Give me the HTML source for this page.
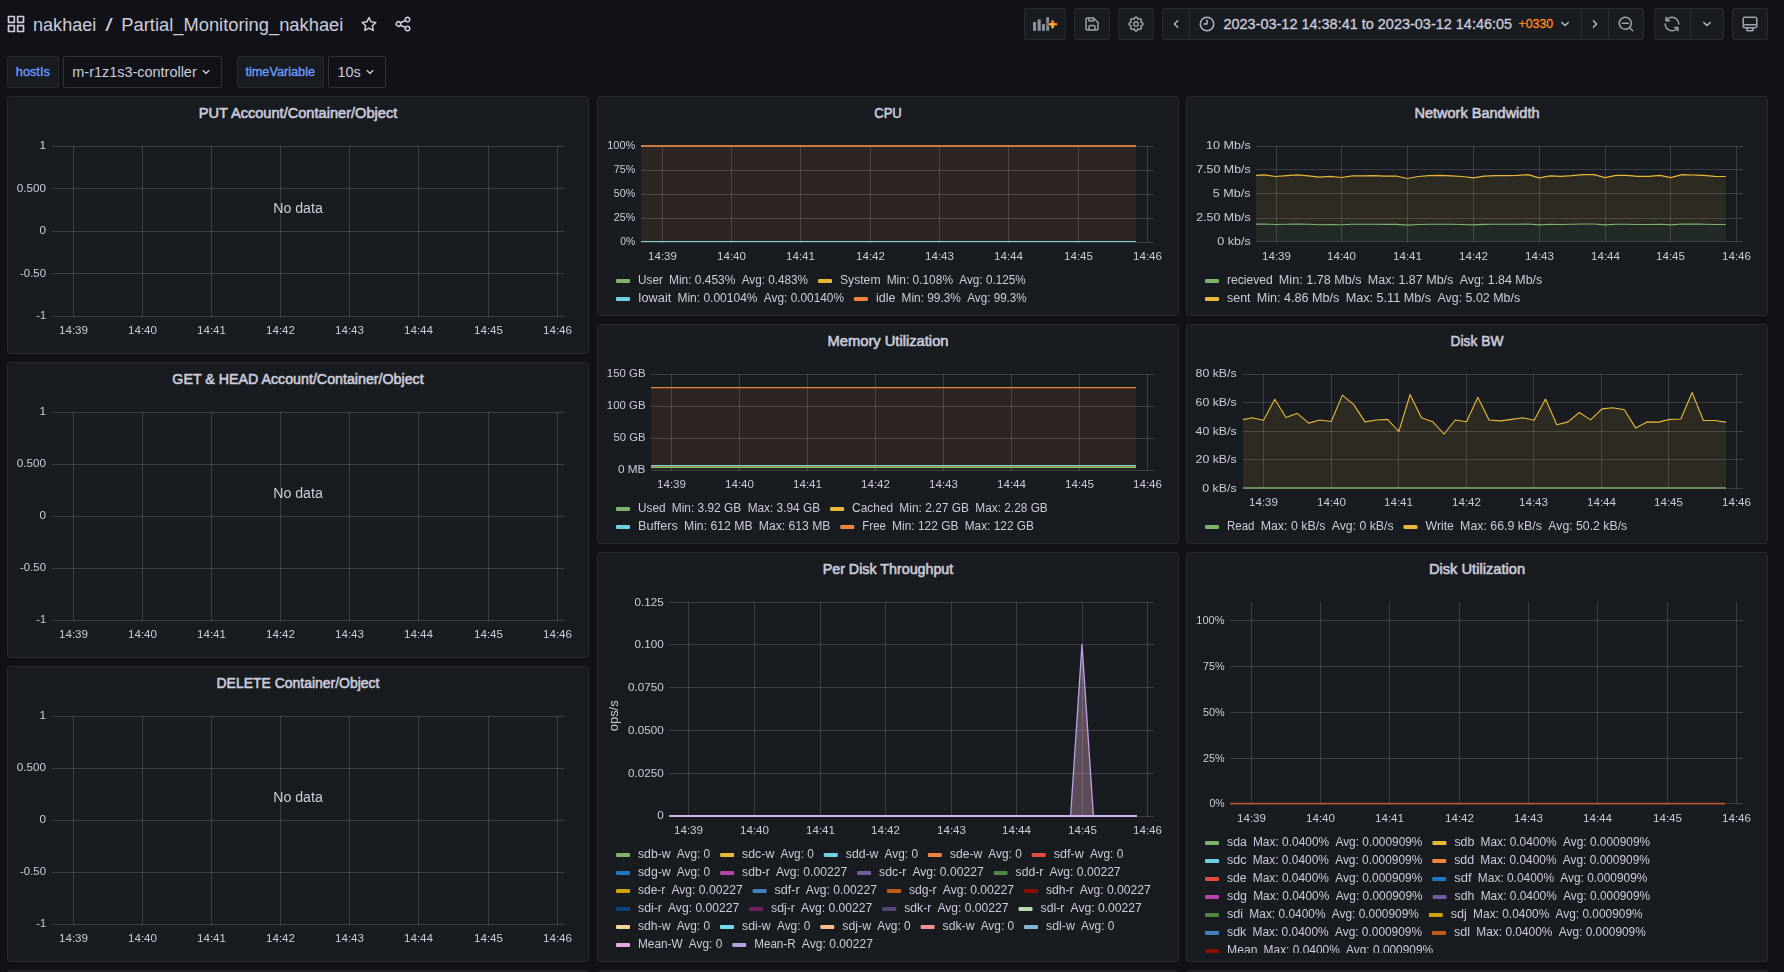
<!DOCTYPE html>
<html lang="en"><head><meta charset="utf-8"><title>Partial_Monitoring_nakhaei - Grafana</title>
<style>
html,body{margin:0;padding:0;background:#111217;}
body{width:1784px;height:972px;overflow:hidden;position:relative;font-family:"Liberation Sans",sans-serif;color:#ccccdc;}
.panel{position:absolute;box-sizing:border-box;background:#181b1f;border:1px solid #25272c;border-radius:3px;overflow:hidden}
.psvg{position:absolute;left:-1px;top:-1px;font-family:"Liberation Sans",sans-serif}
svg text{font-family:"Liberation Sans",sans-serif}
#root{position:absolute;left:0;top:0;width:1784px;height:972px}
.gl{will-change:transform}

.tb{position:absolute;box-sizing:border-box;background:#181b1f;border:1px solid #2a2c32;border-radius:2px}
.vl{position:absolute;box-sizing:border-box;background:#181b1f;border:1px solid #25272c;border-radius:2px}
.vv{position:absolute;box-sizing:border-box;background:#111217;border:1px solid #2f3137;border-radius:2px}
#hdr{position:absolute;left:0;top:0}

</style></head><body>
<div id="root">
<header><div class="tb" style="left:1024px;top:8px;width:42px;height:32px"></div><div class="tb" style="left:1074px;top:8px;width:36px;height:32px"></div><div class="tb" style="left:1118px;top:8px;width:36px;height:32px"></div><div class="tb" style="left:1162px;top:8px;width:28px;height:32px;border-radius:2px 0 0 2px"></div><div class="tb" style="left:1189px;top:8px;width:393px;height:32px;border-radius:0"></div><div class="tb" style="left:1581px;top:8px;width:28px;height:32px;border-radius:0"></div><div class="tb" style="left:1608px;top:8px;width:36px;height:32px;border-radius:0 2px 2px 0"></div><div class="tb" style="left:1654px;top:8px;width:37px;height:32px;border-radius:2px 0 0 2px"></div><div class="tb" style="left:1690px;top:8px;width:34px;height:32px;border-radius:0 2px 2px 0"></div><div class="tb" style="left:1732px;top:8px;width:36px;height:32px"></div><div class="vl" style="left:7px;top:56px;width:52px;height:32px"></div><div class="vv" style="left:63px;top:56px;width:159px;height:32px"></div><div class="vl" style="left:237px;top:56px;width:87px;height:32px"></div><div class="vv" style="left:328px;top:56px;width:58px;height:32px"></div><svg id="hdr" width="1784" height="96" viewBox="0 0 1784 96"><path transform="translate(6,14) scale(0.8333)" d="M10 13H3a1 1 0 0 0-1 1v7a1 1 0 0 0 1 1h7a1 1 0 0 0 1-1v-7a1 1 0 0 0-1-1zm-1 7H4v-5h5zM21 2h-7a1 1 0 0 0-1 1v7a1 1 0 0 0 1 1h7a1 1 0 0 0 1-1V3a1 1 0 0 0-1-1zm-1 7h-5V4h5zm1 4h-7a1 1 0 0 0-1 1v7a1 1 0 0 0 1 1h7a1 1 0 0 0 1-1v-7a1 1 0 0 0-1-1zm-1 7h-5v-5h5zM10 2H3a1 1 0 0 0-1 1v7a1 1 0 0 0 1 1h7a1 1 0 0 0 1-1V3a1 1 0 0 0-1-1zM9 9H4V4h5z" fill="#ccccdc"/><text x="33.00" y="31.00" font-size="18" fill="#ccccdc" text-anchor="start" textLength="63.33" lengthAdjust="spacingAndGlyphs">nakhaei</text><text x="105.20" y="31.00" font-size="18" fill="#ccccdc" text-anchor="start" textLength="7.43" lengthAdjust="spacingAndGlyphs">/</text><text x="121.30" y="31.00" font-size="18" fill="#ccccdc" text-anchor="start" textLength="222.06" lengthAdjust="spacingAndGlyphs">Partial_Monitoring_nakhaei</text><path transform="translate(360,15) scale(0.7500)" d="M22,9.67A1,1,0,0,0,21.14,9l-5.69-.83L12.9,3a1,1,0,0,0-1.8,0L8.55,8.16,2.86,9a1,1,0,0,0-.81.68,1,1,0,0,0,.25,1l4.13,4-1,5.68A1,1,0,0,0,6.9,21.44L12,18.77l5.1,2.67a.93.93,0,0,0,.46.12,1,1,0,0,0,.59-.19,1,1,0,0,0,.4-1l-1-5.68,4.13-4A1,1,0,0,0,22,9.67Zm-6.15,4a1,1,0,0,0-.29.88l.72,4.2-3.76-2a1.06,1.06,0,0,0-.94,0l-3.76,2,.72-4.2a1,1,0,0,0-.29-.88l-3-3,4.21-.61a1,1,0,0,0,.76-.55L12,5.7l1.88,3.82a1,1,0,0,0,.76.55l4.21.61Z" fill="#ccccdc"/><path transform="translate(394,15) scale(0.7500)" d="M18,14a4,4,0,0,0-3.08,1.48l-5.1-2.35a3.64,3.64,0,0,0,0-2.26l5.1-2.35A4,4,0,1,0,14,6a4.17,4.17,0,0,0,.07.71L8.79,9.14a4,4,0,1,0,0,5.72l5.28,2.43A4.17,4.17,0,0,0,14,18a4,4,0,1,0,4-4ZM18,4a2,2,0,1,1-2,2A2,2,0,0,1,18,4ZM6,14a2,2,0,1,1,2-2A2,2,0,0,1,6,14Zm12,6a2,2,0,1,1,2-2A2,2,0,0,1,18,20Z" fill="#ccccdc"/><defs><linearGradient id="pg" x1="0" y1="0" x2="0" y2="1"><stop offset="0" stop-color="#ff8533"/><stop offset="0.55" stop-color="#ffa82e"/><stop offset="1" stop-color="#ffd61a"/></linearGradient></defs><g fill="#8d93a0"><rect x="1033" y="22.1" width="3" height="8.7"/><rect x="1037.6" y="19.4" width="3.1" height="11.4"/><rect x="1042" y="24.1" width="2.9" height="6.7"/><rect x="1046.3" y="17.2" width="2.8" height="13.6"/></g><path d="M1051.1 19.9h3v2.8h3.2v3h-3.2v2.8h-3v-2.8h-3.2v-3h3.2z" fill="url(#pg)" stroke="#181b1f" stroke-width="0.6"/><path transform="translate(1083,15) scale(0.7500)" d="M20.71,9.29l-6-6a1,1,0,0,0-.32-.21A1.09,1.09,0,0,0,14,3H6A3,3,0,0,0,3,6V18a3,3,0,0,0,3,3H18a3,3,0,0,0,3-3V10A1,1,0,0,0,20.71,9.29ZM9,5h4V7H9Zm6,14H9V16a1,1,0,0,1,1-1h4a1,1,0,0,1,1,1Zm4-1a1,1,0,0,1-1,1H17V16a3,3,0,0,0-3-3H10a3,3,0,0,0-3,3v3H6a1,1,0,0,1-1-1V6A1,1,0,0,1,6,5H7V8A1,1,0,0,0,8,9h6a1,1,0,0,0,1-1V6.41l4,4Z" fill="#9fa1ab"/><path transform="translate(1127,15) scale(0.7500)" d="M21.32,9.55l-1.89-.63.89-1.78A1,1,0,0,0,20.13,6L18,3.87a1,1,0,0,0-1.15-.19l-1.78.89-.63-1.89A1,1,0,0,0,13.5,2h-3a1,1,0,0,0-.95.68L8.92,4.57,7.14,3.68A1,1,0,0,0,6,3.87L3.87,6a1,1,0,0,0-.19,1.15l.89,1.78-1.89.63A1,1,0,0,0,2,10.5v3a1,1,0,0,0,.68.95l1.89.63-.89,1.78A1,1,0,0,0,3.87,18L6,20.13a1,1,0,0,0,1.15.19l1.78-.89.63,1.89a1,1,0,0,0,.95.68h3a1,1,0,0,0,.95-.68l.63-1.89,1.78.89A1,1,0,0,0,18,20.13L20.13,18a1,1,0,0,0,.19-1.15l-.89-1.78,1.89-.63A1,1,0,0,0,22,13.5v-3A1,1,0,0,0,21.32,9.55ZM20,12.78l-1.2.4A2,2,0,0,0,17.64,16l.57,1.14-1.1,1.1L16,17.64a2,2,0,0,0-2.79,1.16l-.4,1.2H11.22l-.4-1.2A2,2,0,0,0,8,17.64l-1.14.57-1.1-1.1L6.36,16A2,2,0,0,0,5.2,13.18L4,12.78V11.22l1.2-.4A2,2,0,0,0,6.36,8L5.79,6.89l1.1-1.1L8,6.36A2,2,0,0,0,10.82,5.2l.4-1.2h1.56l.4,1.2A2,2,0,0,0,16,6.36l1.14-.57,1.1,1.1L17.64,8a2,2,0,0,0,1.16,2.79l1.2.4ZM12,8a4,4,0,1,0,4,4A4,4,0,0,0,12,8Zm0,6a2,2,0,1,1,2-2A2,2,0,0,1,12,14Z" fill="#9fa1ab"/><path transform="translate(1167,15) scale(0.7500)" d="M11.29,12l3.54-3.54a1,1,0,0,0,0-1.41,1,1,0,0,0-1.42,0L9.17,11.29a1,1,0,0,0,0,1.42L13.41,17a1,1,0,0,0,.71.29,1,1,0,0,0,.71-.29,1,1,0,0,0,0-1.41Z" fill="#b3b5c2"/><path transform="translate(1198,15) scale(0.7500)" d="M12,2A10,10,0,1,0,22,12,10.01114,10.01114,0,0,0,12,2Zm0,18a8,8,0,1,1,8-8A8.00917,8.00917,0,0,1,12,20ZM12,6a.99974.99974,0,0,0-1,1v4H8a1,1,0,0,0,0,2h4a.99974.99974,0,0,0,1-1V7A.99974.99974,0,0,0,12,6Z" fill="#b3b5c2"/><text x="1223.50" y="29.00" font-size="14" fill="#ccccdc" text-anchor="start" textLength="288.57" lengthAdjust="spacingAndGlyphs" stroke="#ccccdc" stroke-width="0.3">2023-03-12 14:38:41 to 2023-03-12 14:46:05</text><text x="1518.50" y="28.20" font-size="12" fill="#ff8a1e" text-anchor="start" textLength="34.57" lengthAdjust="spacingAndGlyphs" stroke="#ff8a1e" stroke-width="0.3">+0330</text><path transform="translate(1556,15) scale(0.7500)" d="M17,9.17a1,1,0,0,0-1.41,0L12,12.71,8.46,9.17a1,1,0,0,0-1.41,0,1,1,0,0,0,0,1.42l4.24,4.24a1,1,0,0,0,1.42,0L17,10.59A1,1,0,0,0,17,9.17Z" fill="#b3b5c2"/><path transform="translate(1586,15) scale(0.7500)" d="M14.83,11.29,10.59,7.05a1,1,0,0,0-1.42,0,1,1,0,0,0,0,1.41L12.71,12,9.17,15.54a1,1,0,0,0,0,1.41,1,1,0,0,0,.71.29,1,1,0,0,0,.71-.29l4.24-4.24A1,1,0,0,0,14.83,11.29Z" fill="#b3b5c2"/><path transform="translate(1617,15) scale(0.7500)" d="M21.71,20.29,18,16.61A9,9,0,1,0,16.61,18l3.68,3.68a1,1,0,0,0,1.42,0A1,1,0,0,0,21.71,20.29ZM11,18a7,7,0,1,1,7-7A7,7,0,0,1,11,18Zm4-8H7a1,1,0,0,0,0,2h8a1,1,0,0,0,0-2Z" fill="#9fa1ab"/><path transform="translate(1663,15) scale(0.7500)" d="M19.91,15.51H15.38a1,1,0,0,0,0,2h2.4A8,8,0,0,1,4,12a1,1,0,0,0-2,0,10,10,0,0,0,16.88,7.23V21a1,1,0,0,0,2,0V16.5A1,1,0,0,0,19.91,15.51ZM12,2A10,10,0,0,0,5.12,4.77V3a1,1,0,0,0-2,0V7.5a1,1,0,0,0,1,1h4.5a1,1,0,0,0,0-2H6.22A8,8,0,0,1,20,12a1,1,0,0,0,2,0A10,10,0,0,0,12,2Z" fill="#9fa1ab"/><path transform="translate(1698,15) scale(0.7500)" d="M17,9.17a1,1,0,0,0-1.41,0L12,12.71,8.46,9.17a1,1,0,0,0-1.41,0,1,1,0,0,0,0,1.42l4.24,4.24a1,1,0,0,0,1.42,0L17,10.59A1,1,0,0,0,17,9.17Z" fill="#b3b5c2"/><path transform="translate(1741,15) scale(0.7500)" d="M19,2H5A3,3,0,0,0,2,5V15a3,3,0,0,0,3,3H7.64l-.58,1a2,2,0,0,0,0,2,2,2,0,0,0,1.75,1h6.46A2,2,0,0,0,17,21a2,2,0,0,0,0-2l-.59-1H19a3,3,0,0,0,3-3V5A3,3,0,0,0,19,2ZM8.77,20,10,18H14l1.2,2ZM20,15a1,1,0,0,1-1,1H5a1,1,0,0,1-1-1V14H20Zm0-3H4V5A1,1,0,0,1,5,4H19a1,1,0,0,1,1,1Z" fill="#9fa1ab"/><text x="15.80" y="76.30" font-size="12" fill="#6e9fff" text-anchor="start" textLength="34.03" lengthAdjust="spacingAndGlyphs" stroke="#6e9fff" stroke-width="0.3">hostIs</text><text x="72.30" y="77.00" font-size="14" fill="#ccccdc" text-anchor="start" textLength="124.43" lengthAdjust="spacingAndGlyphs">m-r1z1s3-controller</text><path transform="translate(198,64) scale(0.6667)" d="M17,9.17a1,1,0,0,0-1.41,0L12,12.71,8.46,9.17a1,1,0,0,0-1.41,0,1,1,0,0,0,0,1.42l4.24,4.24a1,1,0,0,0,1.42,0L17,10.59A1,1,0,0,0,17,9.17Z" fill="#ccccdc"/><text x="245.40" y="76.30" font-size="12" fill="#6e9fff" text-anchor="start" textLength="69.66" lengthAdjust="spacingAndGlyphs" stroke="#6e9fff" stroke-width="0.3">timeVariable</text><text x="337.50" y="77.00" font-size="14" fill="#ccccdc" text-anchor="start" textLength="23.26" lengthAdjust="spacingAndGlyphs">10s</text><path transform="translate(362,64) scale(0.6667)" d="M17,9.17a1,1,0,0,0-1.41,0L12,12.71,8.46,9.17a1,1,0,0,0-1.41,0,1,1,0,0,0,0,1.42l4.24,4.24a1,1,0,0,0,1.42,0L17,10.59A1,1,0,0,0,17,9.17Z" fill="#ccccdc"/></svg></header>
<main>
<section class="panel" style="left:7px;top:96px;width:582px;height:258px"><svg class="psvg" width="582" height="258" viewBox="7 96 582 258"><text x="298.00" y="117.50" font-size="14" fill="#ccccdc" text-anchor="middle" textLength="198.50" lengthAdjust="spacingAndGlyphs" stroke="#ccccdc" stroke-width="0.55">PUT Account/Container/Object</text></svg><svg class="psvg gl" width="582" height="258" viewBox="7 96 582 258"><g stroke="rgba(255,255,255,0.15)" stroke-width="1" shape-rendering="crispEdges"><line x1="52" x2="564" y1="146.5" y2="146.5"/><line x1="52" x2="564" y1="188.5" y2="188.5"/><line x1="52" x2="564" y1="231.5" y2="231.5"/><line x1="52" x2="564" y1="273.5" y2="273.5"/><line x1="52" x2="564" y1="316.5" y2="316.5"/><line x1="73.5" x2="73.5" y1="146" y2="317"/><line x1="142.5" x2="142.5" y1="146" y2="317"/><line x1="211.5" x2="211.5" y1="146" y2="317"/><line x1="280.5" x2="280.5" y1="146" y2="317"/><line x1="349.5" x2="349.5" y1="146" y2="317"/><line x1="418.5" x2="418.5" y1="146" y2="317"/><line x1="488.5" x2="488.5" y1="146" y2="317"/><line x1="557.5" x2="557.5" y1="146" y2="317"/></g><text x="46.00" y="149.40" font-size="11.5" fill="#ccccdc" text-anchor="end" textLength="6.54" lengthAdjust="spacingAndGlyphs">1</text><text x="46.00" y="191.90" font-size="11.5" fill="#ccccdc" text-anchor="end" textLength="29.24" lengthAdjust="spacingAndGlyphs">0.500</text><text x="46.00" y="234.40" font-size="11.5" fill="#ccccdc" text-anchor="end" textLength="6.54" lengthAdjust="spacingAndGlyphs">0</text><text x="46.00" y="276.90" font-size="11.5" fill="#ccccdc" text-anchor="end" textLength="25.91" lengthAdjust="spacingAndGlyphs">-0.50</text><text x="46.00" y="319.40" font-size="11.5" fill="#ccccdc" text-anchor="end" textLength="9.76" lengthAdjust="spacingAndGlyphs">-1</text><text x="73.50" y="334.30" font-size="11.5" fill="#ccccdc" text-anchor="middle" textLength="28.99" lengthAdjust="spacingAndGlyphs">14:39</text><text x="142.50" y="334.30" font-size="11.5" fill="#ccccdc" text-anchor="middle" textLength="28.99" lengthAdjust="spacingAndGlyphs">14:40</text><text x="211.50" y="334.30" font-size="11.5" fill="#ccccdc" text-anchor="middle" textLength="28.99" lengthAdjust="spacingAndGlyphs">14:41</text><text x="280.50" y="334.30" font-size="11.5" fill="#ccccdc" text-anchor="middle" textLength="28.99" lengthAdjust="spacingAndGlyphs">14:42</text><text x="349.50" y="334.30" font-size="11.5" fill="#ccccdc" text-anchor="middle" textLength="28.99" lengthAdjust="spacingAndGlyphs">14:43</text><text x="418.50" y="334.30" font-size="11.5" fill="#ccccdc" text-anchor="middle" textLength="28.99" lengthAdjust="spacingAndGlyphs">14:44</text><text x="488.50" y="334.30" font-size="11.5" fill="#ccccdc" text-anchor="middle" textLength="28.99" lengthAdjust="spacingAndGlyphs">14:45</text><text x="557.50" y="334.30" font-size="11.5" fill="#ccccdc" text-anchor="middle" textLength="28.99" lengthAdjust="spacingAndGlyphs">14:46</text><text x="298.00" y="212.70" font-size="14" fill="#c7d0d9" text-anchor="middle" textLength="49.63" lengthAdjust="spacingAndGlyphs">No data</text></svg></section><section class="panel" style="left:7px;top:362px;width:582px;height:296px"><svg class="psvg" width="582" height="296" viewBox="7 362 582 296"><text x="298.00" y="383.50" font-size="14" fill="#ccccdc" text-anchor="middle" textLength="251.31" lengthAdjust="spacingAndGlyphs" stroke="#ccccdc" stroke-width="0.55">GET &amp; HEAD Account/Container/Object</text></svg><svg class="psvg gl" width="582" height="296" viewBox="7 362 582 296"><g stroke="rgba(255,255,255,0.15)" stroke-width="1" shape-rendering="crispEdges"><line x1="52" x2="564" y1="412.5" y2="412.5"/><line x1="52" x2="564" y1="464.5" y2="464.5"/><line x1="52" x2="564" y1="516.5" y2="516.5"/><line x1="52" x2="564" y1="568.5" y2="568.5"/><line x1="52" x2="564" y1="620.5" y2="620.5"/><line x1="73.5" x2="73.5" y1="412" y2="621"/><line x1="142.5" x2="142.5" y1="412" y2="621"/><line x1="211.5" x2="211.5" y1="412" y2="621"/><line x1="280.5" x2="280.5" y1="412" y2="621"/><line x1="349.5" x2="349.5" y1="412" y2="621"/><line x1="418.5" x2="418.5" y1="412" y2="621"/><line x1="488.5" x2="488.5" y1="412" y2="621"/><line x1="557.5" x2="557.5" y1="412" y2="621"/></g><text x="46.00" y="415.40" font-size="11.5" fill="#ccccdc" text-anchor="end" textLength="6.54" lengthAdjust="spacingAndGlyphs">1</text><text x="46.00" y="467.40" font-size="11.5" fill="#ccccdc" text-anchor="end" textLength="29.24" lengthAdjust="spacingAndGlyphs">0.500</text><text x="46.00" y="519.40" font-size="11.5" fill="#ccccdc" text-anchor="end" textLength="6.54" lengthAdjust="spacingAndGlyphs">0</text><text x="46.00" y="571.40" font-size="11.5" fill="#ccccdc" text-anchor="end" textLength="25.91" lengthAdjust="spacingAndGlyphs">-0.50</text><text x="46.00" y="623.40" font-size="11.5" fill="#ccccdc" text-anchor="end" textLength="9.76" lengthAdjust="spacingAndGlyphs">-1</text><text x="73.50" y="638.30" font-size="11.5" fill="#ccccdc" text-anchor="middle" textLength="28.99" lengthAdjust="spacingAndGlyphs">14:39</text><text x="142.50" y="638.30" font-size="11.5" fill="#ccccdc" text-anchor="middle" textLength="28.99" lengthAdjust="spacingAndGlyphs">14:40</text><text x="211.50" y="638.30" font-size="11.5" fill="#ccccdc" text-anchor="middle" textLength="28.99" lengthAdjust="spacingAndGlyphs">14:41</text><text x="280.50" y="638.30" font-size="11.5" fill="#ccccdc" text-anchor="middle" textLength="28.99" lengthAdjust="spacingAndGlyphs">14:42</text><text x="349.50" y="638.30" font-size="11.5" fill="#ccccdc" text-anchor="middle" textLength="28.99" lengthAdjust="spacingAndGlyphs">14:43</text><text x="418.50" y="638.30" font-size="11.5" fill="#ccccdc" text-anchor="middle" textLength="28.99" lengthAdjust="spacingAndGlyphs">14:44</text><text x="488.50" y="638.30" font-size="11.5" fill="#ccccdc" text-anchor="middle" textLength="28.99" lengthAdjust="spacingAndGlyphs">14:45</text><text x="557.50" y="638.30" font-size="11.5" fill="#ccccdc" text-anchor="middle" textLength="28.99" lengthAdjust="spacingAndGlyphs">14:46</text><text x="298.00" y="497.70" font-size="14" fill="#c7d0d9" text-anchor="middle" textLength="49.63" lengthAdjust="spacingAndGlyphs">No data</text></svg></section><section class="panel" style="left:7px;top:666px;width:582px;height:296px"><svg class="psvg" width="582" height="296" viewBox="7 666 582 296"><text x="298.00" y="687.50" font-size="14" fill="#ccccdc" text-anchor="middle" textLength="162.96" lengthAdjust="spacingAndGlyphs" stroke="#ccccdc" stroke-width="0.55">DELETE Container/Object</text></svg><svg class="psvg gl" width="582" height="296" viewBox="7 666 582 296"><g stroke="rgba(255,255,255,0.15)" stroke-width="1" shape-rendering="crispEdges"><line x1="52" x2="564" y1="716.5" y2="716.5"/><line x1="52" x2="564" y1="768.5" y2="768.5"/><line x1="52" x2="564" y1="820.5" y2="820.5"/><line x1="52" x2="564" y1="872.5" y2="872.5"/><line x1="52" x2="564" y1="924.5" y2="924.5"/><line x1="73.5" x2="73.5" y1="716" y2="925"/><line x1="142.5" x2="142.5" y1="716" y2="925"/><line x1="211.5" x2="211.5" y1="716" y2="925"/><line x1="280.5" x2="280.5" y1="716" y2="925"/><line x1="349.5" x2="349.5" y1="716" y2="925"/><line x1="418.5" x2="418.5" y1="716" y2="925"/><line x1="488.5" x2="488.5" y1="716" y2="925"/><line x1="557.5" x2="557.5" y1="716" y2="925"/></g><text x="46.00" y="719.40" font-size="11.5" fill="#ccccdc" text-anchor="end" textLength="6.54" lengthAdjust="spacingAndGlyphs">1</text><text x="46.00" y="771.40" font-size="11.5" fill="#ccccdc" text-anchor="end" textLength="29.24" lengthAdjust="spacingAndGlyphs">0.500</text><text x="46.00" y="823.40" font-size="11.5" fill="#ccccdc" text-anchor="end" textLength="6.54" lengthAdjust="spacingAndGlyphs">0</text><text x="46.00" y="875.40" font-size="11.5" fill="#ccccdc" text-anchor="end" textLength="25.91" lengthAdjust="spacingAndGlyphs">-0.50</text><text x="46.00" y="927.40" font-size="11.5" fill="#ccccdc" text-anchor="end" textLength="9.76" lengthAdjust="spacingAndGlyphs">-1</text><text x="73.50" y="942.30" font-size="11.5" fill="#ccccdc" text-anchor="middle" textLength="28.99" lengthAdjust="spacingAndGlyphs">14:39</text><text x="142.50" y="942.30" font-size="11.5" fill="#ccccdc" text-anchor="middle" textLength="28.99" lengthAdjust="spacingAndGlyphs">14:40</text><text x="211.50" y="942.30" font-size="11.5" fill="#ccccdc" text-anchor="middle" textLength="28.99" lengthAdjust="spacingAndGlyphs">14:41</text><text x="280.50" y="942.30" font-size="11.5" fill="#ccccdc" text-anchor="middle" textLength="28.99" lengthAdjust="spacingAndGlyphs">14:42</text><text x="349.50" y="942.30" font-size="11.5" fill="#ccccdc" text-anchor="middle" textLength="28.99" lengthAdjust="spacingAndGlyphs">14:43</text><text x="418.50" y="942.30" font-size="11.5" fill="#ccccdc" text-anchor="middle" textLength="28.99" lengthAdjust="spacingAndGlyphs">14:44</text><text x="488.50" y="942.30" font-size="11.5" fill="#ccccdc" text-anchor="middle" textLength="28.99" lengthAdjust="spacingAndGlyphs">14:45</text><text x="557.50" y="942.30" font-size="11.5" fill="#ccccdc" text-anchor="middle" textLength="28.99" lengthAdjust="spacingAndGlyphs">14:46</text><text x="298.00" y="801.70" font-size="14" fill="#c7d0d9" text-anchor="middle" textLength="49.63" lengthAdjust="spacingAndGlyphs">No data</text></svg></section><section class="panel" style="left:597px;top:96px;width:582px;height:220px"><svg class="psvg" width="582" height="220" viewBox="597 96 582 220"><text x="888.00" y="117.50" font-size="14" fill="#ccccdc" text-anchor="middle" textLength="27.53" lengthAdjust="spacingAndGlyphs" stroke="#ccccdc" stroke-width="0.55">CPU</text></svg><svg class="psvg gl" width="582" height="220" viewBox="597 96 582 220"><rect x="641" y="147" width="495" height="95" fill="#EF843C" fill-opacity="0.1"/><g stroke="rgba(255,255,255,0.15)" stroke-width="1" shape-rendering="crispEdges"><line x1="641" x2="1154" y1="146.5" y2="146.5"/><line x1="641" x2="1154" y1="170.5" y2="170.5"/><line x1="641" x2="1154" y1="194.5" y2="194.5"/><line x1="641" x2="1154" y1="218.5" y2="218.5"/><line x1="641" x2="1154" y1="242.5" y2="242.5"/><line x1="662.5" x2="662.5" y1="146" y2="243"/><line x1="731.5" x2="731.5" y1="146" y2="243"/><line x1="800.5" x2="800.5" y1="146" y2="243"/><line x1="870.5" x2="870.5" y1="146" y2="243"/><line x1="939.5" x2="939.5" y1="146" y2="243"/><line x1="1008.5" x2="1008.5" y1="146" y2="243"/><line x1="1078.5" x2="1078.5" y1="146" y2="243"/><line x1="1147.5" x2="1147.5" y1="146" y2="243"/></g><rect x="641" y="145" width="495" height="2" fill="#cc7a3c"/><rect x="641" y="241" width="495" height="1" fill="#78d2d8"/><text x="635.30" y="149.10" font-size="11.5" fill="#ccccdc" text-anchor="end" textLength="28.15" lengthAdjust="spacingAndGlyphs">100%</text><text x="635.30" y="173.10" font-size="11.5" fill="#ccccdc" text-anchor="end" textLength="21.61" lengthAdjust="spacingAndGlyphs">75%</text><text x="635.30" y="197.10" font-size="11.5" fill="#ccccdc" text-anchor="end" textLength="21.61" lengthAdjust="spacingAndGlyphs">50%</text><text x="635.30" y="221.10" font-size="11.5" fill="#ccccdc" text-anchor="end" textLength="21.61" lengthAdjust="spacingAndGlyphs">25%</text><text x="635.30" y="245.10" font-size="11.5" fill="#ccccdc" text-anchor="end" textLength="15.07" lengthAdjust="spacingAndGlyphs">0%</text><text x="662.50" y="260.30" font-size="11.5" fill="#ccccdc" text-anchor="middle" textLength="28.99" lengthAdjust="spacingAndGlyphs">14:39</text><text x="731.50" y="260.30" font-size="11.5" fill="#ccccdc" text-anchor="middle" textLength="28.99" lengthAdjust="spacingAndGlyphs">14:40</text><text x="800.50" y="260.30" font-size="11.5" fill="#ccccdc" text-anchor="middle" textLength="28.99" lengthAdjust="spacingAndGlyphs">14:41</text><text x="870.50" y="260.30" font-size="11.5" fill="#ccccdc" text-anchor="middle" textLength="28.99" lengthAdjust="spacingAndGlyphs">14:42</text><text x="939.50" y="260.30" font-size="11.5" fill="#ccccdc" text-anchor="middle" textLength="28.99" lengthAdjust="spacingAndGlyphs">14:43</text><text x="1008.50" y="260.30" font-size="11.5" fill="#ccccdc" text-anchor="middle" textLength="28.99" lengthAdjust="spacingAndGlyphs">14:44</text><text x="1078.50" y="260.30" font-size="11.5" fill="#ccccdc" text-anchor="middle" textLength="28.99" lengthAdjust="spacingAndGlyphs">14:45</text><text x="1147.50" y="260.30" font-size="11.5" fill="#ccccdc" text-anchor="middle" textLength="28.99" lengthAdjust="spacingAndGlyphs">14:46</text><rect x="616.0" y="279" width="14" height="4" rx="1" fill="#7EB26D"/><text x="638.00" y="284.00" font-size="12" fill="#ccccdc" text-anchor="start" textLength="24.86" lengthAdjust="spacingAndGlyphs">User</text><text x="669.00" y="284.00" font-size="12" fill="#ccccdc" text-anchor="start" textLength="66.34" lengthAdjust="spacingAndGlyphs">Min: 0.453%</text><text x="741.69" y="284.00" font-size="12" fill="#ccccdc" text-anchor="start" textLength="66.32" lengthAdjust="spacingAndGlyphs">Avg: 0.483%</text><rect x="818.0" y="279" width="14" height="4" rx="1" fill="#EAB839"/><text x="839.97" y="284.00" font-size="12" fill="#ccccdc" text-anchor="start" textLength="40.56" lengthAdjust="spacingAndGlyphs">System</text><text x="886.67" y="284.00" font-size="12" fill="#ccccdc" text-anchor="start" textLength="66.34" lengthAdjust="spacingAndGlyphs">Min: 0.108%</text><text x="959.36" y="284.00" font-size="12" fill="#ccccdc" text-anchor="start" textLength="66.32" lengthAdjust="spacingAndGlyphs">Avg: 0.125%</text><rect x="616.0" y="297" width="14" height="4" rx="1" fill="#6ED0E0"/><text x="638.00" y="302.00" font-size="12" fill="#ccccdc" text-anchor="start" textLength="33.25" lengthAdjust="spacingAndGlyphs">Iowait</text><text x="677.40" y="302.00" font-size="12" fill="#ccccdc" text-anchor="start" textLength="80.12" lengthAdjust="spacingAndGlyphs">Min: 0.00104%</text><text x="763.87" y="302.00" font-size="12" fill="#ccccdc" text-anchor="start" textLength="80.11" lengthAdjust="spacingAndGlyphs">Avg: 0.00140%</text><rect x="853.9" y="297" width="14" height="4" rx="1" fill="#EF843C"/><text x="875.94" y="302.00" font-size="12" fill="#ccccdc" text-anchor="start" textLength="19.42" lengthAdjust="spacingAndGlyphs">idle</text><text x="901.50" y="302.00" font-size="12" fill="#ccccdc" text-anchor="start" textLength="59.44" lengthAdjust="spacingAndGlyphs">Min: 99.3%</text><text x="967.29" y="302.00" font-size="12" fill="#ccccdc" text-anchor="start" textLength="59.43" lengthAdjust="spacingAndGlyphs">Avg: 99.3%</text></svg></section><section class="panel" style="left:597px;top:324px;width:582px;height:220px"><svg class="psvg" width="582" height="220" viewBox="597 324 582 220"><text x="888.00" y="345.50" font-size="14" fill="#ccccdc" text-anchor="middle" textLength="121.00" lengthAdjust="spacingAndGlyphs" stroke="#ccccdc" stroke-width="0.55">Memory Utilization</text></svg><svg class="psvg gl" width="582" height="220" viewBox="597 324 582 220"><rect x="651" y="388" width="485" height="77" fill="#EF843C" fill-opacity="0.1"/><rect x="651" y="468" width="485" height="2" fill="#7EB26D" fill-opacity="0.08"/><g stroke="rgba(255,255,255,0.15)" stroke-width="1" shape-rendering="crispEdges"><line x1="651" x2="1154" y1="374.5" y2="374.5"/><line x1="651" x2="1154" y1="406.5" y2="406.5"/><line x1="651" x2="1154" y1="438.5" y2="438.5"/><line x1="651" x2="1154" y1="470.5" y2="470.5"/><line x1="671.5" x2="671.5" y1="374" y2="471"/><line x1="739.5" x2="739.5" y1="374" y2="471"/><line x1="807.5" x2="807.5" y1="374" y2="471"/><line x1="875.5" x2="875.5" y1="374" y2="471"/><line x1="943.5" x2="943.5" y1="374" y2="471"/><line x1="1011.5" x2="1011.5" y1="374" y2="471"/><line x1="1079.5" x2="1079.5" y1="374" y2="471"/><line x1="1147.5" x2="1147.5" y1="374" y2="471"/></g><path d="M651 387.65H1136" stroke="#EF843C" stroke-width="1.3" fill="none"/><rect x="651" y="465" width="485" height="1" fill="#78cdd6"/><rect x="651" y="466" width="485" height="1" fill="#9d8b3b"/><rect x="651" y="467" width="485" height="1" fill="#8cc36e"/><text x="645.50" y="377.10" font-size="11.5" fill="#ccccdc" text-anchor="end" textLength="38.67" lengthAdjust="spacingAndGlyphs">150 GB</text><text x="645.50" y="409.10" font-size="11.5" fill="#ccccdc" text-anchor="end" textLength="38.67" lengthAdjust="spacingAndGlyphs">100 GB</text><text x="645.50" y="441.10" font-size="11.5" fill="#ccccdc" text-anchor="end" textLength="31.96" lengthAdjust="spacingAndGlyphs">50 GB</text><text x="645.50" y="473.10" font-size="11.5" fill="#ccccdc" text-anchor="end" textLength="27.54" lengthAdjust="spacingAndGlyphs">0 MB</text><text x="671.50" y="488.20" font-size="11.5" fill="#ccccdc" text-anchor="middle" textLength="28.99" lengthAdjust="spacingAndGlyphs">14:39</text><text x="739.50" y="488.20" font-size="11.5" fill="#ccccdc" text-anchor="middle" textLength="28.99" lengthAdjust="spacingAndGlyphs">14:40</text><text x="807.50" y="488.20" font-size="11.5" fill="#ccccdc" text-anchor="middle" textLength="28.99" lengthAdjust="spacingAndGlyphs">14:41</text><text x="875.50" y="488.20" font-size="11.5" fill="#ccccdc" text-anchor="middle" textLength="28.99" lengthAdjust="spacingAndGlyphs">14:42</text><text x="943.50" y="488.20" font-size="11.5" fill="#ccccdc" text-anchor="middle" textLength="28.99" lengthAdjust="spacingAndGlyphs">14:43</text><text x="1011.50" y="488.20" font-size="11.5" fill="#ccccdc" text-anchor="middle" textLength="28.99" lengthAdjust="spacingAndGlyphs">14:44</text><text x="1079.50" y="488.20" font-size="11.5" fill="#ccccdc" text-anchor="middle" textLength="28.99" lengthAdjust="spacingAndGlyphs">14:45</text><text x="1147.50" y="488.20" font-size="11.5" fill="#ccccdc" text-anchor="middle" textLength="28.99" lengthAdjust="spacingAndGlyphs">14:46</text><rect x="616.0" y="507" width="14" height="4" rx="1" fill="#7EB26D"/><text x="638.00" y="512.00" font-size="12" fill="#ccccdc" text-anchor="start" textLength="27.56" lengthAdjust="spacingAndGlyphs">Used</text><text x="671.71" y="512.00" font-size="12" fill="#ccccdc" text-anchor="start" textLength="69.58" lengthAdjust="spacingAndGlyphs">Min: 3.92 GB</text><text x="747.64" y="512.00" font-size="12" fill="#ccccdc" text-anchor="start" textLength="72.51" lengthAdjust="spacingAndGlyphs">Max: 3.94 GB</text><rect x="830.1" y="507" width="14" height="4" rx="1" fill="#EAB839"/><text x="852.10" y="512.00" font-size="12" fill="#ccccdc" text-anchor="start" textLength="41.11" lengthAdjust="spacingAndGlyphs">Cached</text><text x="899.36" y="512.00" font-size="12" fill="#ccccdc" text-anchor="start" textLength="69.58" lengthAdjust="spacingAndGlyphs">Min: 2.27 GB</text><text x="975.29" y="512.00" font-size="12" fill="#ccccdc" text-anchor="start" textLength="72.51" lengthAdjust="spacingAndGlyphs">Max: 2.28 GB</text><rect x="616.0" y="525" width="14" height="4" rx="1" fill="#6ED0E0"/><text x="638.00" y="530.00" font-size="12" fill="#ccccdc" text-anchor="start" textLength="39.82" lengthAdjust="spacingAndGlyphs">Buffers</text><text x="683.97" y="530.00" font-size="12" fill="#ccccdc" text-anchor="start" textLength="68.57" lengthAdjust="spacingAndGlyphs">Min: 612 MB</text><text x="758.89" y="530.00" font-size="12" fill="#ccccdc" text-anchor="start" textLength="71.50" lengthAdjust="spacingAndGlyphs">Max: 613 MB</text><rect x="840.3" y="525" width="14" height="4" rx="1" fill="#EF843C"/><text x="862.34" y="530.00" font-size="12" fill="#ccccdc" text-anchor="start" textLength="23.61" lengthAdjust="spacingAndGlyphs">Free</text><text x="892.10" y="530.00" font-size="12" fill="#ccccdc" text-anchor="start" textLength="66.27" lengthAdjust="spacingAndGlyphs">Min: 122 GB</text><text x="964.72" y="530.00" font-size="12" fill="#ccccdc" text-anchor="start" textLength="69.20" lengthAdjust="spacingAndGlyphs">Max: 122 GB</text></svg></section><section class="panel" style="left:1186px;top:96px;width:582px;height:220px"><svg class="psvg" width="582" height="220" viewBox="1186 96 582 220"><text x="1477.00" y="117.50" font-size="14" fill="#ccccdc" text-anchor="middle" textLength="125.06" lengthAdjust="spacingAndGlyphs" stroke="#ccccdc" stroke-width="0.55">Network Bandwidth</text></svg><svg class="psvg gl" width="582" height="220" viewBox="1186 96 582 220"><clipPath id="cn"><rect x="1256" y="140" width="487" height="102"/></clipPath><g clip-path="url(#cn)"><polygon points="1253.6,175.4 1264.6,174.9 1275.6,176.5 1286.6,175.7 1297.5,174.9 1308.5,175.8 1319.5,177.1 1330.5,176.4 1341.5,177.5 1352.4,175.8 1363.4,175.8 1374.4,175.6 1385.4,176.1 1396.4,176.0 1407.3,178.5 1418.3,176.5 1429.3,175.6 1440.3,175.4 1451.3,175.8 1462.2,176.5 1473.2,177.8 1484.2,176.1 1495.2,175.7 1506.2,175.7 1517.1,175.4 1528.1,174.6 1539.1,177.9 1550.1,175.8 1561.1,176.3 1572.0,175.7 1583.0,174.7 1594.0,174.6 1605.0,177.7 1616.0,175.4 1626.9,175.3 1637.9,176.4 1648.9,176.3 1659.9,175.4 1670.9,177.7 1681.8,174.6 1692.8,175.0 1703.8,175.4 1714.8,176.3 1725.8,176.5 1725.8,224.5 1714.8,224.5 1703.8,224.2 1692.8,224.1 1681.8,224.0 1670.9,224.9 1659.9,224.2 1648.9,224.5 1637.9,224.5 1626.9,224.2 1616.0,224.2 1605.0,224.9 1594.0,224.0 1583.0,224.0 1572.0,224.3 1561.1,224.5 1550.1,224.3 1539.1,224.9 1528.1,224.0 1517.1,224.2 1506.2,224.3 1495.2,224.3 1484.2,224.4 1473.2,224.9 1462.2,224.5 1451.3,224.3 1440.3,224.2 1429.3,224.3 1418.3,224.5 1407.3,225.1 1396.4,224.4 1385.4,224.4 1374.4,224.3 1363.4,224.3 1352.4,224.3 1341.5,224.8 1330.5,224.5 1319.5,224.7 1308.5,224.3 1297.5,224.0 1286.6,224.3 1275.6,224.5 1264.6,224.0 1253.6,224.2" fill="#EAB839" fill-opacity="0.1"/><polygon points="1253.6,224.2 1264.6,224.0 1275.6,224.5 1286.6,224.3 1297.5,224.0 1308.5,224.3 1319.5,224.7 1330.5,224.5 1341.5,224.8 1352.4,224.3 1363.4,224.3 1374.4,224.3 1385.4,224.4 1396.4,224.4 1407.3,225.1 1418.3,224.5 1429.3,224.3 1440.3,224.2 1451.3,224.3 1462.2,224.5 1473.2,224.9 1484.2,224.4 1495.2,224.3 1506.2,224.3 1517.1,224.2 1528.1,224.0 1539.1,224.9 1550.1,224.3 1561.1,224.5 1572.0,224.3 1583.0,224.0 1594.0,224.0 1605.0,224.9 1616.0,224.2 1626.9,224.2 1637.9,224.5 1648.9,224.5 1659.9,224.2 1670.9,224.9 1681.8,224.0 1692.8,224.1 1703.8,224.2 1714.8,224.5 1725.8,224.5 1725.8,241.5 1253.6,241.5" fill="#7EB26D" fill-opacity="0.1"/></g><g stroke="rgba(255,255,255,0.15)" stroke-width="1" shape-rendering="crispEdges"><line x1="1256" x2="1743" y1="146.5" y2="146.5"/><line x1="1256" x2="1743" y1="169.5" y2="169.5"/><line x1="1256" x2="1743" y1="193.5" y2="193.5"/><line x1="1256" x2="1743" y1="218.5" y2="218.5"/><line x1="1256" x2="1743" y1="241.5" y2="241.5"/><line x1="1276.5" x2="1276.5" y1="146" y2="242"/><line x1="1341.5" x2="1341.5" y1="146" y2="242"/><line x1="1407.5" x2="1407.5" y1="146" y2="242"/><line x1="1473.5" x2="1473.5" y1="146" y2="242"/><line x1="1539.5" x2="1539.5" y1="146" y2="242"/><line x1="1605.5" x2="1605.5" y1="146" y2="242"/><line x1="1670.5" x2="1670.5" y1="146" y2="242"/><line x1="1736.5" x2="1736.5" y1="146" y2="242"/></g><g clip-path="url(#cn)"><polyline points="1253.6,224.2 1264.6,224.0 1275.6,224.5 1286.6,224.3 1297.5,224.0 1308.5,224.3 1319.5,224.7 1330.5,224.5 1341.5,224.8 1352.4,224.3 1363.4,224.3 1374.4,224.3 1385.4,224.4 1396.4,224.4 1407.3,225.1 1418.3,224.5 1429.3,224.3 1440.3,224.2 1451.3,224.3 1462.2,224.5 1473.2,224.9 1484.2,224.4 1495.2,224.3 1506.2,224.3 1517.1,224.2 1528.1,224.0 1539.1,224.9 1550.1,224.3 1561.1,224.5 1572.0,224.3 1583.0,224.0 1594.0,224.0 1605.0,224.9 1616.0,224.2 1626.9,224.2 1637.9,224.5 1648.9,224.5 1659.9,224.2 1670.9,224.9 1681.8,224.0 1692.8,224.1 1703.8,224.2 1714.8,224.5 1725.8,224.5" stroke="#7EB26D" stroke-width="1.1" fill="none"/><polyline points="1253.6,175.4 1264.6,174.9 1275.6,176.5 1286.6,175.7 1297.5,174.9 1308.5,175.8 1319.5,177.1 1330.5,176.4 1341.5,177.5 1352.4,175.8 1363.4,175.8 1374.4,175.6 1385.4,176.1 1396.4,176.0 1407.3,178.5 1418.3,176.5 1429.3,175.6 1440.3,175.4 1451.3,175.8 1462.2,176.5 1473.2,177.8 1484.2,176.1 1495.2,175.7 1506.2,175.7 1517.1,175.4 1528.1,174.6 1539.1,177.9 1550.1,175.8 1561.1,176.3 1572.0,175.7 1583.0,174.7 1594.0,174.6 1605.0,177.7 1616.0,175.4 1626.9,175.3 1637.9,176.4 1648.9,176.3 1659.9,175.4 1670.9,177.7 1681.8,174.6 1692.8,175.0 1703.8,175.4 1714.8,176.3 1725.8,176.5" stroke="#EAB839" stroke-width="1.2" fill="none"/></g><text x="1250.70" y="149.20" font-size="11.5" fill="#ccccdc" text-anchor="end" textLength="44.60" lengthAdjust="spacingAndGlyphs">10 Mb/s</text><text x="1250.70" y="173.20" font-size="11.5" fill="#ccccdc" text-anchor="end" textLength="54.46" lengthAdjust="spacingAndGlyphs">7.50 Mb/s</text><text x="1250.70" y="197.20" font-size="11.5" fill="#ccccdc" text-anchor="end" textLength="37.89" lengthAdjust="spacingAndGlyphs">5 Mb/s</text><text x="1250.70" y="221.20" font-size="11.5" fill="#ccccdc" text-anchor="end" textLength="54.46" lengthAdjust="spacingAndGlyphs">2.50 Mb/s</text><text x="1250.70" y="245.20" font-size="11.5" fill="#ccccdc" text-anchor="end" textLength="33.52" lengthAdjust="spacingAndGlyphs">0 kb/s</text><text x="1276.50" y="260.30" font-size="11.5" fill="#ccccdc" text-anchor="middle" textLength="28.99" lengthAdjust="spacingAndGlyphs">14:39</text><text x="1341.50" y="260.30" font-size="11.5" fill="#ccccdc" text-anchor="middle" textLength="28.99" lengthAdjust="spacingAndGlyphs">14:40</text><text x="1407.50" y="260.30" font-size="11.5" fill="#ccccdc" text-anchor="middle" textLength="28.99" lengthAdjust="spacingAndGlyphs">14:41</text><text x="1473.50" y="260.30" font-size="11.5" fill="#ccccdc" text-anchor="middle" textLength="28.99" lengthAdjust="spacingAndGlyphs">14:42</text><text x="1539.50" y="260.30" font-size="11.5" fill="#ccccdc" text-anchor="middle" textLength="28.99" lengthAdjust="spacingAndGlyphs">14:43</text><text x="1605.50" y="260.30" font-size="11.5" fill="#ccccdc" text-anchor="middle" textLength="28.99" lengthAdjust="spacingAndGlyphs">14:44</text><text x="1670.50" y="260.30" font-size="11.5" fill="#ccccdc" text-anchor="middle" textLength="28.99" lengthAdjust="spacingAndGlyphs">14:45</text><text x="1736.50" y="260.30" font-size="11.5" fill="#ccccdc" text-anchor="middle" textLength="28.99" lengthAdjust="spacingAndGlyphs">14:46</text><rect x="1205.0" y="279" width="14" height="4" rx="1" fill="#7EB26D"/><text x="1227.00" y="284.00" font-size="12" fill="#ccccdc" text-anchor="start" textLength="45.72" lengthAdjust="spacingAndGlyphs">recieved</text><text x="1278.87" y="284.00" font-size="12" fill="#ccccdc" text-anchor="start" textLength="82.59" lengthAdjust="spacingAndGlyphs">Min: 1.78 Mb/s</text><text x="1367.81" y="284.00" font-size="12" fill="#ccccdc" text-anchor="start" textLength="85.52" lengthAdjust="spacingAndGlyphs">Max: 1.87 Mb/s</text><text x="1459.69" y="284.00" font-size="12" fill="#ccccdc" text-anchor="start" textLength="82.58" lengthAdjust="spacingAndGlyphs">Avg: 1.84 Mb/s</text><rect x="1205.0" y="297" width="14" height="4" rx="1" fill="#EAB839"/><text x="1227.00" y="302.00" font-size="12" fill="#ccccdc" text-anchor="start" textLength="23.56" lengthAdjust="spacingAndGlyphs">sent</text><text x="1256.71" y="302.00" font-size="12" fill="#ccccdc" text-anchor="start" textLength="82.59" lengthAdjust="spacingAndGlyphs">Min: 4.86 Mb/s</text><text x="1345.65" y="302.00" font-size="12" fill="#ccccdc" text-anchor="start" textLength="85.52" lengthAdjust="spacingAndGlyphs">Max: 5.11 Mb/s</text><text x="1437.52" y="302.00" font-size="12" fill="#ccccdc" text-anchor="start" textLength="82.58" lengthAdjust="spacingAndGlyphs">Avg: 5.02 Mb/s</text></svg></section><section class="panel" style="left:1186px;top:324px;width:582px;height:220px"><svg class="psvg" width="582" height="220" viewBox="1186 324 582 220"><text x="1477.00" y="345.50" font-size="14" fill="#ccccdc" text-anchor="middle" textLength="52.82" lengthAdjust="spacingAndGlyphs" stroke="#ccccdc" stroke-width="0.55">Disk BW</text></svg><svg class="psvg gl" width="582" height="220" viewBox="1186 324 582 220"><clipPath id="cd"><rect x="1243" y="370" width="500" height="120"/></clipPath><g clip-path="url(#cd)"><polygon points="1240.9,420.1 1252.2,417.8 1263.5,420.2 1274.8,399.2 1286.0,417.5 1297.3,413.3 1308.6,423.1 1319.9,420.0 1331.2,421.5 1342.4,395.1 1353.7,404.6 1365.0,421.9 1376.3,420.0 1387.6,419.4 1398.8,431.5 1410.1,394.5 1421.4,417.7 1432.7,421.7 1444.0,434.0 1455.2,420.0 1466.5,421.7 1477.8,397.3 1489.1,420.0 1500.4,420.9 1511.6,419.4 1522.9,417.7 1534.2,420.2 1545.5,399.0 1556.8,424.7 1568.0,421.9 1579.3,412.5 1590.6,419.9 1601.9,408.9 1613.2,407.8 1624.4,409.8 1635.7,428.1 1647.0,421.9 1658.3,422.1 1669.6,419.4 1680.8,419.0 1692.1,392.5 1703.4,420.5 1714.7,420.5 1726.0,422.1 1726.0,488 1240.9,488" fill="#EAB839" fill-opacity="0.1"/></g><g stroke="rgba(255,255,255,0.15)" stroke-width="1" shape-rendering="crispEdges"><line x1="1243" x2="1743" y1="374.5" y2="374.5"/><line x1="1243" x2="1743" y1="402.5" y2="402.5"/><line x1="1243" x2="1743" y1="431.5" y2="431.5"/><line x1="1243" x2="1743" y1="459.5" y2="459.5"/><line x1="1243" x2="1743" y1="488.5" y2="488.5"/><line x1="1263.5" x2="1263.5" y1="374" y2="489"/><line x1="1331.5" x2="1331.5" y1="374" y2="489"/><line x1="1398.5" x2="1398.5" y1="374" y2="489"/><line x1="1466.5" x2="1466.5" y1="374" y2="489"/><line x1="1533.5" x2="1533.5" y1="374" y2="489"/><line x1="1601.5" x2="1601.5" y1="374" y2="489"/><line x1="1668.5" x2="1668.5" y1="374" y2="489"/><line x1="1736.5" x2="1736.5" y1="374" y2="489"/></g><g clip-path="url(#cd)"><rect x="1243" y="487" width="483.0" height="2" fill="#6a8c5e"/><polyline points="1240.9,420.1 1252.2,417.8 1263.5,420.2 1274.8,399.2 1286.0,417.5 1297.3,413.3 1308.6,423.1 1319.9,420.0 1331.2,421.5 1342.4,395.1 1353.7,404.6 1365.0,421.9 1376.3,420.0 1387.6,419.4 1398.8,431.5 1410.1,394.5 1421.4,417.7 1432.7,421.7 1444.0,434.0 1455.2,420.0 1466.5,421.7 1477.8,397.3 1489.1,420.0 1500.4,420.9 1511.6,419.4 1522.9,417.7 1534.2,420.2 1545.5,399.0 1556.8,424.7 1568.0,421.9 1579.3,412.5 1590.6,419.9 1601.9,408.9 1613.2,407.8 1624.4,409.8 1635.7,428.1 1647.0,421.9 1658.3,422.1 1669.6,419.4 1680.8,419.0 1692.1,392.5 1703.4,420.5 1714.7,420.5 1726.0,422.1" stroke="#EAB839" stroke-width="1.1" fill="none" stroke-linejoin="round"/></g><text x="1236.60" y="377.30" font-size="11.5" fill="#ccccdc" text-anchor="end" textLength="40.96" lengthAdjust="spacingAndGlyphs">80 kB/s</text><text x="1236.60" y="405.90" font-size="11.5" fill="#ccccdc" text-anchor="end" textLength="40.96" lengthAdjust="spacingAndGlyphs">60 kB/s</text><text x="1236.60" y="434.50" font-size="11.5" fill="#ccccdc" text-anchor="end" textLength="40.96" lengthAdjust="spacingAndGlyphs">40 kB/s</text><text x="1236.60" y="463.10" font-size="11.5" fill="#ccccdc" text-anchor="end" textLength="40.96" lengthAdjust="spacingAndGlyphs">20 kB/s</text><text x="1236.60" y="491.70" font-size="11.5" fill="#ccccdc" text-anchor="end" textLength="34.25" lengthAdjust="spacingAndGlyphs">0 kB/s</text><text x="1263.50" y="506.30" font-size="11.5" fill="#ccccdc" text-anchor="middle" textLength="28.99" lengthAdjust="spacingAndGlyphs">14:39</text><text x="1331.50" y="506.30" font-size="11.5" fill="#ccccdc" text-anchor="middle" textLength="28.99" lengthAdjust="spacingAndGlyphs">14:40</text><text x="1398.50" y="506.30" font-size="11.5" fill="#ccccdc" text-anchor="middle" textLength="28.99" lengthAdjust="spacingAndGlyphs">14:41</text><text x="1466.50" y="506.30" font-size="11.5" fill="#ccccdc" text-anchor="middle" textLength="28.99" lengthAdjust="spacingAndGlyphs">14:42</text><text x="1533.50" y="506.30" font-size="11.5" fill="#ccccdc" text-anchor="middle" textLength="28.99" lengthAdjust="spacingAndGlyphs">14:43</text><text x="1601.50" y="506.30" font-size="11.5" fill="#ccccdc" text-anchor="middle" textLength="28.99" lengthAdjust="spacingAndGlyphs">14:44</text><text x="1668.50" y="506.30" font-size="11.5" fill="#ccccdc" text-anchor="middle" textLength="28.99" lengthAdjust="spacingAndGlyphs">14:45</text><text x="1736.50" y="506.30" font-size="11.5" fill="#ccccdc" text-anchor="middle" textLength="28.99" lengthAdjust="spacingAndGlyphs">14:46</text><rect x="1205.0" y="525" width="14" height="4" rx="1" fill="#7EB26D"/><text x="1227.00" y="530.00" font-size="12" fill="#ccccdc" text-anchor="start" textLength="27.50" lengthAdjust="spacingAndGlyphs">Read</text><text x="1260.65" y="530.00" font-size="12" fill="#ccccdc" text-anchor="start" textLength="64.76" lengthAdjust="spacingAndGlyphs">Max: 0 kB/s</text><text x="1331.77" y="530.00" font-size="12" fill="#ccccdc" text-anchor="start" textLength="61.82" lengthAdjust="spacingAndGlyphs">Avg: 0 kB/s</text><rect x="1403.5" y="525" width="14" height="4" rx="1" fill="#EAB839"/><text x="1425.54" y="530.00" font-size="12" fill="#ccccdc" text-anchor="start" textLength="28.40" lengthAdjust="spacingAndGlyphs">Write</text><text x="1460.09" y="530.00" font-size="12" fill="#ccccdc" text-anchor="start" textLength="81.87" lengthAdjust="spacingAndGlyphs">Max: 66.9 kB/s</text><text x="1548.30" y="530.00" font-size="12" fill="#ccccdc" text-anchor="start" textLength="78.92" lengthAdjust="spacingAndGlyphs">Avg: 50.2 kB/s</text></svg></section><section class="panel" style="left:597px;top:552px;width:582px;height:410px"><svg class="psvg" width="582" height="410" viewBox="597 552 582 410"><text x="888.00" y="573.50" font-size="14" fill="#ccccdc" text-anchor="middle" textLength="130.57" lengthAdjust="spacingAndGlyphs" stroke="#ccccdc" stroke-width="0.55">Per Disk Throughput</text></svg><svg class="psvg gl" width="582" height="410" viewBox="597 552 582 410"><polygon points="1071.0,816 1082.0,644.5 1093.2,816" fill="#5e4c5a"/><g stroke="rgba(255,255,255,0.15)" stroke-width="1" shape-rendering="crispEdges"><line x1="669" x2="1154" y1="602.5" y2="602.5"/><line x1="669" x2="1154" y1="644.5" y2="644.5"/><line x1="669" x2="1154" y1="687.5" y2="687.5"/><line x1="669" x2="1154" y1="730.5" y2="730.5"/><line x1="669" x2="1154" y1="773.5" y2="773.5"/><line x1="669" x2="1154" y1="816.5" y2="816.5"/><line x1="688.5" x2="688.5" y1="602" y2="817"/><line x1="754.5" x2="754.5" y1="602" y2="817"/><line x1="820.5" x2="820.5" y1="602" y2="817"/><line x1="885.5" x2="885.5" y1="602" y2="817"/><line x1="951.5" x2="951.5" y1="602" y2="817"/><line x1="1016.5" x2="1016.5" y1="602" y2="817"/><line x1="1082.5" x2="1082.5" y1="602" y2="817"/><line x1="1147.5" x2="1147.5" y1="602" y2="817"/></g><path d="M669 816H1137" stroke="#d3b1ee" stroke-width="2" fill="none"/><polyline points="1070.6,816 1082.0,644.2 1093.4,816" stroke="#b9a6e8" stroke-width="1.3" fill="none" stroke-linejoin="miter"/><text x="663.70" y="605.50" font-size="11.5" fill="#ccccdc" text-anchor="end" textLength="29.24" lengthAdjust="spacingAndGlyphs">0.125</text><text x="663.70" y="647.50" font-size="11.5" fill="#ccccdc" text-anchor="end" textLength="29.24" lengthAdjust="spacingAndGlyphs">0.100</text><text x="663.70" y="690.50" font-size="11.5" fill="#ccccdc" text-anchor="end" textLength="35.78" lengthAdjust="spacingAndGlyphs">0.0750</text><text x="663.70" y="733.50" font-size="11.5" fill="#ccccdc" text-anchor="end" textLength="35.78" lengthAdjust="spacingAndGlyphs">0.0500</text><text x="663.70" y="776.50" font-size="11.5" fill="#ccccdc" text-anchor="end" textLength="35.78" lengthAdjust="spacingAndGlyphs">0.0250</text><text x="663.70" y="819.30" font-size="11.5" fill="#ccccdc" text-anchor="end" textLength="6.54" lengthAdjust="spacingAndGlyphs">0</text><text x="688.50" y="834.40" font-size="11.5" fill="#ccccdc" text-anchor="middle" textLength="28.99" lengthAdjust="spacingAndGlyphs">14:39</text><text x="754.50" y="834.40" font-size="11.5" fill="#ccccdc" text-anchor="middle" textLength="28.99" lengthAdjust="spacingAndGlyphs">14:40</text><text x="820.50" y="834.40" font-size="11.5" fill="#ccccdc" text-anchor="middle" textLength="28.99" lengthAdjust="spacingAndGlyphs">14:41</text><text x="885.50" y="834.40" font-size="11.5" fill="#ccccdc" text-anchor="middle" textLength="28.99" lengthAdjust="spacingAndGlyphs">14:42</text><text x="951.50" y="834.40" font-size="11.5" fill="#ccccdc" text-anchor="middle" textLength="28.99" lengthAdjust="spacingAndGlyphs">14:43</text><text x="1016.50" y="834.40" font-size="11.5" fill="#ccccdc" text-anchor="middle" textLength="28.99" lengthAdjust="spacingAndGlyphs">14:44</text><text x="1082.50" y="834.40" font-size="11.5" fill="#ccccdc" text-anchor="middle" textLength="28.99" lengthAdjust="spacingAndGlyphs">14:45</text><text x="1147.50" y="834.40" font-size="11.5" fill="#ccccdc" text-anchor="middle" textLength="28.99" lengthAdjust="spacingAndGlyphs">14:46</text><g transform="translate(617.6,715.8) rotate(-90)"><text x="0.00" y="0.00" font-size="12" fill="#ccccdc" text-anchor="middle" textLength="30.92" lengthAdjust="spacingAndGlyphs">ops/s</text></g><rect x="616.0" y="853" width="14" height="4" rx="1" fill="#7EB26D"/><text x="638.00" y="858.00" font-size="12" fill="#ccccdc" text-anchor="start" textLength="32.63" lengthAdjust="spacingAndGlyphs">sdb-w</text><text x="676.78" y="858.00" font-size="12" fill="#ccccdc" text-anchor="start" textLength="33.39" lengthAdjust="spacingAndGlyphs">Avg: 0</text><rect x="720.1" y="853" width="14" height="4" rx="1" fill="#EAB839"/><text x="742.12" y="858.00" font-size="12" fill="#ccccdc" text-anchor="start" textLength="32.18" lengthAdjust="spacingAndGlyphs">sdc-w</text><text x="780.45" y="858.00" font-size="12" fill="#ccccdc" text-anchor="start" textLength="33.39" lengthAdjust="spacingAndGlyphs">Avg: 0</text><rect x="823.8" y="853" width="14" height="4" rx="1" fill="#6ED0E0"/><text x="845.79" y="858.00" font-size="12" fill="#ccccdc" text-anchor="start" textLength="32.66" lengthAdjust="spacingAndGlyphs">sdd-w</text><text x="884.60" y="858.00" font-size="12" fill="#ccccdc" text-anchor="start" textLength="33.39" lengthAdjust="spacingAndGlyphs">Avg: 0</text><rect x="927.9" y="853" width="14" height="4" rx="1" fill="#EF843C"/><text x="949.94" y="858.00" font-size="12" fill="#ccccdc" text-anchor="start" textLength="32.26" lengthAdjust="spacingAndGlyphs">sde-w</text><text x="988.35" y="858.00" font-size="12" fill="#ccccdc" text-anchor="start" textLength="33.39" lengthAdjust="spacingAndGlyphs">Avg: 0</text><rect x="1031.7" y="853" width="14" height="4" rx="1" fill="#E24D42"/><text x="1053.69" y="858.00" font-size="12" fill="#ccccdc" text-anchor="start" textLength="30.07" lengthAdjust="spacingAndGlyphs">sdf-w</text><text x="1089.90" y="858.00" font-size="12" fill="#ccccdc" text-anchor="start" textLength="33.39" lengthAdjust="spacingAndGlyphs">Avg: 0</text><rect x="616.0" y="871" width="14" height="4" rx="1" fill="#1F78C1"/><text x="638.00" y="876.00" font-size="12" fill="#ccccdc" text-anchor="start" textLength="32.63" lengthAdjust="spacingAndGlyphs">sdg-w</text><text x="676.78" y="876.00" font-size="12" fill="#ccccdc" text-anchor="start" textLength="33.39" lengthAdjust="spacingAndGlyphs">Avg: 0</text><rect x="720.1" y="871" width="14" height="4" rx="1" fill="#BA43A9"/><text x="742.12" y="876.00" font-size="12" fill="#ccccdc" text-anchor="start" textLength="27.68" lengthAdjust="spacingAndGlyphs">sdb-r</text><text x="775.96" y="876.00" font-size="12" fill="#ccccdc" text-anchor="start" textLength="71.17" lengthAdjust="spacingAndGlyphs">Avg: 0.00227</text><rect x="857.1" y="871" width="14" height="4" rx="1" fill="#705DA0"/><text x="879.08" y="876.00" font-size="12" fill="#ccccdc" text-anchor="start" textLength="27.23" lengthAdjust="spacingAndGlyphs">sdc-r</text><text x="912.46" y="876.00" font-size="12" fill="#ccccdc" text-anchor="start" textLength="71.17" lengthAdjust="spacingAndGlyphs">Avg: 0.00227</text><rect x="993.6" y="871" width="14" height="4" rx="1" fill="#508642"/><text x="1015.58" y="876.00" font-size="12" fill="#ccccdc" text-anchor="start" textLength="27.71" lengthAdjust="spacingAndGlyphs">sdd-r</text><text x="1049.44" y="876.00" font-size="12" fill="#ccccdc" text-anchor="start" textLength="71.17" lengthAdjust="spacingAndGlyphs">Avg: 0.00227</text><rect x="616.0" y="889" width="14" height="4" rx="1" fill="#CCA300"/><text x="638.00" y="894.00" font-size="12" fill="#ccccdc" text-anchor="start" textLength="27.31" lengthAdjust="spacingAndGlyphs">sde-r</text><text x="671.46" y="894.00" font-size="12" fill="#ccccdc" text-anchor="start" textLength="71.17" lengthAdjust="spacingAndGlyphs">Avg: 0.00227</text><rect x="752.6" y="889" width="14" height="4" rx="1" fill="#447EBC"/><text x="774.58" y="894.00" font-size="12" fill="#ccccdc" text-anchor="start" textLength="25.12" lengthAdjust="spacingAndGlyphs">sdf-r</text><text x="805.85" y="894.00" font-size="12" fill="#ccccdc" text-anchor="start" textLength="71.17" lengthAdjust="spacingAndGlyphs">Avg: 0.00227</text><rect x="887.0" y="889" width="14" height="4" rx="1" fill="#C15C17"/><text x="908.97" y="894.00" font-size="12" fill="#ccccdc" text-anchor="start" textLength="27.68" lengthAdjust="spacingAndGlyphs">sdg-r</text><text x="942.81" y="894.00" font-size="12" fill="#ccccdc" text-anchor="start" textLength="71.17" lengthAdjust="spacingAndGlyphs">Avg: 0.00227</text><rect x="1023.9" y="889" width="14" height="4" rx="1" fill="#890F02"/><text x="1045.93" y="894.00" font-size="12" fill="#ccccdc" text-anchor="start" textLength="27.55" lengthAdjust="spacingAndGlyphs">sdh-r</text><text x="1079.63" y="894.00" font-size="12" fill="#ccccdc" text-anchor="start" textLength="71.17" lengthAdjust="spacingAndGlyphs">Avg: 0.00227</text><rect x="616.0" y="907" width="14" height="4" rx="1" fill="#0A437C"/><text x="638.00" y="912.00" font-size="12" fill="#ccccdc" text-anchor="start" textLength="23.86" lengthAdjust="spacingAndGlyphs">sdi-r</text><text x="668.01" y="912.00" font-size="12" fill="#ccccdc" text-anchor="start" textLength="71.17" lengthAdjust="spacingAndGlyphs">Avg: 0.00227</text><rect x="749.1" y="907" width="14" height="4" rx="1" fill="#6D1F62"/><text x="771.14" y="912.00" font-size="12" fill="#ccccdc" text-anchor="start" textLength="23.82" lengthAdjust="spacingAndGlyphs">sdj-r</text><text x="801.10" y="912.00" font-size="12" fill="#ccccdc" text-anchor="start" textLength="71.17" lengthAdjust="spacingAndGlyphs">Avg: 0.00227</text><rect x="882.2" y="907" width="14" height="4" rx="1" fill="#584477"/><text x="904.23" y="912.00" font-size="12" fill="#ccccdc" text-anchor="start" textLength="27.03" lengthAdjust="spacingAndGlyphs">sdk-r</text><text x="937.40" y="912.00" font-size="12" fill="#ccccdc" text-anchor="start" textLength="71.17" lengthAdjust="spacingAndGlyphs">Avg: 0.00227</text><rect x="1018.5" y="907" width="14" height="4" rx="1" fill="#B7DBAB"/><text x="1040.53" y="912.00" font-size="12" fill="#ccccdc" text-anchor="start" textLength="23.86" lengthAdjust="spacingAndGlyphs">sdl-r</text><text x="1070.54" y="912.00" font-size="12" fill="#ccccdc" text-anchor="start" textLength="71.17" lengthAdjust="spacingAndGlyphs">Avg: 0.00227</text><rect x="616.0" y="925" width="14" height="4" rx="1" fill="#F4D598"/><text x="638.00" y="930.00" font-size="12" fill="#ccccdc" text-anchor="start" textLength="32.51" lengthAdjust="spacingAndGlyphs">sdh-w</text><text x="676.65" y="930.00" font-size="12" fill="#ccccdc" text-anchor="start" textLength="33.39" lengthAdjust="spacingAndGlyphs">Avg: 0</text><rect x="720.0" y="925" width="14" height="4" rx="1" fill="#70DBED"/><text x="741.99" y="930.00" font-size="12" fill="#ccccdc" text-anchor="start" textLength="28.81" lengthAdjust="spacingAndGlyphs">sdi-w</text><text x="776.96" y="930.00" font-size="12" fill="#ccccdc" text-anchor="start" textLength="33.39" lengthAdjust="spacingAndGlyphs">Avg: 0</text><rect x="820.3" y="925" width="14" height="4" rx="1" fill="#F9BA8F"/><text x="842.30" y="930.00" font-size="12" fill="#ccccdc" text-anchor="start" textLength="28.77" lengthAdjust="spacingAndGlyphs">sdj-w</text><text x="877.21" y="930.00" font-size="12" fill="#ccccdc" text-anchor="start" textLength="33.39" lengthAdjust="spacingAndGlyphs">Avg: 0</text><rect x="920.6" y="925" width="14" height="4" rx="1" fill="#F29191"/><text x="942.55" y="930.00" font-size="12" fill="#ccccdc" text-anchor="start" textLength="31.98" lengthAdjust="spacingAndGlyphs">sdk-w</text><text x="980.68" y="930.00" font-size="12" fill="#ccccdc" text-anchor="start" textLength="33.39" lengthAdjust="spacingAndGlyphs">Avg: 0</text><rect x="1024.0" y="925" width="14" height="4" rx="1" fill="#82B5D8"/><text x="1046.02" y="930.00" font-size="12" fill="#ccccdc" text-anchor="start" textLength="28.81" lengthAdjust="spacingAndGlyphs">sdl-w</text><text x="1080.98" y="930.00" font-size="12" fill="#ccccdc" text-anchor="start" textLength="33.39" lengthAdjust="spacingAndGlyphs">Avg: 0</text><rect x="616.0" y="943" width="14" height="4" rx="1" fill="#E5A8E2"/><text x="638.00" y="948.00" font-size="12" fill="#ccccdc" text-anchor="start" textLength="44.71" lengthAdjust="spacingAndGlyphs">Mean-W</text><text x="688.86" y="948.00" font-size="12" fill="#ccccdc" text-anchor="start" textLength="33.39" lengthAdjust="spacingAndGlyphs">Avg: 0</text><rect x="732.2" y="943" width="14" height="4" rx="1" fill="#AEA2E0"/><text x="754.20" y="948.00" font-size="12" fill="#ccccdc" text-anchor="start" textLength="41.46" lengthAdjust="spacingAndGlyphs">Mean-R</text><text x="801.80" y="948.00" font-size="12" fill="#ccccdc" text-anchor="start" textLength="71.17" lengthAdjust="spacingAndGlyphs">Avg: 0.00227</text></svg></section><section class="panel" style="left:1186px;top:552px;width:582px;height:410px"><svg class="psvg" width="582" height="410" viewBox="1186 552 582 410"><text x="1477.00" y="573.50" font-size="14" fill="#ccccdc" text-anchor="middle" textLength="96.18" lengthAdjust="spacingAndGlyphs" stroke="#ccccdc" stroke-width="0.55">Disk Utilization</text></svg><svg class="psvg gl" width="582" height="410" viewBox="1186 552 582 410"><g stroke="rgba(255,255,255,0.15)" stroke-width="1" shape-rendering="crispEdges"><line x1="1230" x2="1743" y1="620.5" y2="620.5"/><line x1="1230" x2="1743" y1="666.5" y2="666.5"/><line x1="1230" x2="1743" y1="712.5" y2="712.5"/><line x1="1230" x2="1743" y1="758.5" y2="758.5"/><line x1="1230" x2="1743" y1="803.5" y2="803.5"/><line x1="1251.5" x2="1251.5" y1="602" y2="804"/><line x1="1320.5" x2="1320.5" y1="602" y2="804"/><line x1="1389.5" x2="1389.5" y1="602" y2="804"/><line x1="1459.5" x2="1459.5" y1="602" y2="804"/><line x1="1528.5" x2="1528.5" y1="602" y2="804"/><line x1="1597.5" x2="1597.5" y1="602" y2="804"/><line x1="1667.5" x2="1667.5" y1="602" y2="804"/><line x1="1736.5" x2="1736.5" y1="602" y2="804"/></g><path d="M1230 803.7H1725" stroke="#b8532a" stroke-width="1.8" fill="none"/><text x="1224.50" y="624.10" font-size="11.5" fill="#ccccdc" text-anchor="end" textLength="28.15" lengthAdjust="spacingAndGlyphs">100%</text><text x="1224.50" y="669.90" font-size="11.5" fill="#ccccdc" text-anchor="end" textLength="21.61" lengthAdjust="spacingAndGlyphs">75%</text><text x="1224.50" y="715.70" font-size="11.5" fill="#ccccdc" text-anchor="end" textLength="21.61" lengthAdjust="spacingAndGlyphs">50%</text><text x="1224.50" y="761.50" font-size="11.5" fill="#ccccdc" text-anchor="end" textLength="21.61" lengthAdjust="spacingAndGlyphs">25%</text><text x="1224.50" y="807.30" font-size="11.5" fill="#ccccdc" text-anchor="end" textLength="15.07" lengthAdjust="spacingAndGlyphs">0%</text><text x="1251.50" y="822.30" font-size="11.5" fill="#ccccdc" text-anchor="middle" textLength="28.99" lengthAdjust="spacingAndGlyphs">14:39</text><text x="1320.50" y="822.30" font-size="11.5" fill="#ccccdc" text-anchor="middle" textLength="28.99" lengthAdjust="spacingAndGlyphs">14:40</text><text x="1389.50" y="822.30" font-size="11.5" fill="#ccccdc" text-anchor="middle" textLength="28.99" lengthAdjust="spacingAndGlyphs">14:41</text><text x="1459.50" y="822.30" font-size="11.5" fill="#ccccdc" text-anchor="middle" textLength="28.99" lengthAdjust="spacingAndGlyphs">14:42</text><text x="1528.50" y="822.30" font-size="11.5" fill="#ccccdc" text-anchor="middle" textLength="28.99" lengthAdjust="spacingAndGlyphs">14:43</text><text x="1597.50" y="822.30" font-size="11.5" fill="#ccccdc" text-anchor="middle" textLength="28.99" lengthAdjust="spacingAndGlyphs">14:44</text><text x="1667.50" y="822.30" font-size="11.5" fill="#ccccdc" text-anchor="middle" textLength="28.99" lengthAdjust="spacingAndGlyphs">14:45</text><text x="1736.50" y="822.30" font-size="11.5" fill="#ccccdc" text-anchor="middle" textLength="28.99" lengthAdjust="spacingAndGlyphs">14:46</text><clipPath id="cu"><rect x="1186" y="552" width="582" height="401"/></clipPath><g clip-path="url(#cu)"><rect x="1205.0" y="841" width="14" height="4" rx="1" fill="#7EB26D"/><text x="1227.00" y="846.00" font-size="12" fill="#ccccdc" text-anchor="start" textLength="19.79" lengthAdjust="spacingAndGlyphs">sda</text><text x="1252.94" y="846.00" font-size="12" fill="#ccccdc" text-anchor="start" textLength="76.17" lengthAdjust="spacingAndGlyphs">Max: 0.0400%</text><text x="1335.45" y="846.00" font-size="12" fill="#ccccdc" text-anchor="start" textLength="87.01" lengthAdjust="spacingAndGlyphs">Avg: 0.000909%</text><rect x="1432.4" y="841" width="14" height="4" rx="1" fill="#EAB839"/><text x="1454.41" y="846.00" font-size="12" fill="#ccccdc" text-anchor="start" textLength="20.00" lengthAdjust="spacingAndGlyphs">sdb</text><text x="1480.56" y="846.00" font-size="12" fill="#ccccdc" text-anchor="start" textLength="76.17" lengthAdjust="spacingAndGlyphs">Max: 0.0400%</text><text x="1563.08" y="846.00" font-size="12" fill="#ccccdc" text-anchor="start" textLength="87.01" lengthAdjust="spacingAndGlyphs">Avg: 0.000909%</text><rect x="1205.0" y="859" width="14" height="4" rx="1" fill="#6ED0E0"/><text x="1227.00" y="864.00" font-size="12" fill="#ccccdc" text-anchor="start" textLength="19.54" lengthAdjust="spacingAndGlyphs">sdc</text><text x="1252.69" y="864.00" font-size="12" fill="#ccccdc" text-anchor="start" textLength="76.17" lengthAdjust="spacingAndGlyphs">Max: 0.0400%</text><text x="1335.21" y="864.00" font-size="12" fill="#ccccdc" text-anchor="start" textLength="87.01" lengthAdjust="spacingAndGlyphs">Avg: 0.000909%</text><rect x="1432.2" y="859" width="14" height="4" rx="1" fill="#EF843C"/><text x="1454.16" y="864.00" font-size="12" fill="#ccccdc" text-anchor="start" textLength="20.03" lengthAdjust="spacingAndGlyphs">sdd</text><text x="1480.34" y="864.00" font-size="12" fill="#ccccdc" text-anchor="start" textLength="76.17" lengthAdjust="spacingAndGlyphs">Max: 0.0400%</text><text x="1562.86" y="864.00" font-size="12" fill="#ccccdc" text-anchor="start" textLength="87.01" lengthAdjust="spacingAndGlyphs">Avg: 0.000909%</text><rect x="1205.0" y="877" width="14" height="4" rx="1" fill="#E24D42"/><text x="1227.00" y="882.00" font-size="12" fill="#ccccdc" text-anchor="start" textLength="19.62" lengthAdjust="spacingAndGlyphs">sde</text><text x="1252.77" y="882.00" font-size="12" fill="#ccccdc" text-anchor="start" textLength="76.17" lengthAdjust="spacingAndGlyphs">Max: 0.0400%</text><text x="1335.29" y="882.00" font-size="12" fill="#ccccdc" text-anchor="start" textLength="87.01" lengthAdjust="spacingAndGlyphs">Avg: 0.000909%</text><rect x="1432.2" y="877" width="14" height="4" rx="1" fill="#1F78C1"/><text x="1454.25" y="882.00" font-size="12" fill="#ccccdc" text-anchor="start" textLength="17.43" lengthAdjust="spacingAndGlyphs">sdf</text><text x="1477.83" y="882.00" font-size="12" fill="#ccccdc" text-anchor="start" textLength="76.17" lengthAdjust="spacingAndGlyphs">Max: 0.0400%</text><text x="1560.35" y="882.00" font-size="12" fill="#ccccdc" text-anchor="start" textLength="87.01" lengthAdjust="spacingAndGlyphs">Avg: 0.000909%</text><rect x="1205.0" y="895" width="14" height="4" rx="1" fill="#BA43A9"/><text x="1227.00" y="900.00" font-size="12" fill="#ccccdc" text-anchor="start" textLength="20.00" lengthAdjust="spacingAndGlyphs">sdg</text><text x="1253.15" y="900.00" font-size="12" fill="#ccccdc" text-anchor="start" textLength="76.17" lengthAdjust="spacingAndGlyphs">Max: 0.0400%</text><text x="1335.66" y="900.00" font-size="12" fill="#ccccdc" text-anchor="start" textLength="87.01" lengthAdjust="spacingAndGlyphs">Avg: 0.000909%</text><rect x="1432.6" y="895" width="14" height="4" rx="1" fill="#705DA0"/><text x="1454.62" y="900.00" font-size="12" fill="#ccccdc" text-anchor="start" textLength="19.87" lengthAdjust="spacingAndGlyphs">sdh</text><text x="1480.64" y="900.00" font-size="12" fill="#ccccdc" text-anchor="start" textLength="76.17" lengthAdjust="spacingAndGlyphs">Max: 0.0400%</text><text x="1563.16" y="900.00" font-size="12" fill="#ccccdc" text-anchor="start" textLength="87.01" lengthAdjust="spacingAndGlyphs">Avg: 0.000909%</text><rect x="1205.0" y="913" width="14" height="4" rx="1" fill="#508642"/><text x="1227.00" y="918.00" font-size="12" fill="#ccccdc" text-anchor="start" textLength="16.18" lengthAdjust="spacingAndGlyphs">sdi</text><text x="1249.33" y="918.00" font-size="12" fill="#ccccdc" text-anchor="start" textLength="76.17" lengthAdjust="spacingAndGlyphs">Max: 0.0400%</text><text x="1331.84" y="918.00" font-size="12" fill="#ccccdc" text-anchor="start" textLength="87.01" lengthAdjust="spacingAndGlyphs">Avg: 0.000909%</text><rect x="1428.8" y="913" width="14" height="4" rx="1" fill="#CCA300"/><text x="1450.80" y="918.00" font-size="12" fill="#ccccdc" text-anchor="start" textLength="16.13" lengthAdjust="spacingAndGlyphs">sdj</text><text x="1473.08" y="918.00" font-size="12" fill="#ccccdc" text-anchor="start" textLength="76.17" lengthAdjust="spacingAndGlyphs">Max: 0.0400%</text><text x="1555.60" y="918.00" font-size="12" fill="#ccccdc" text-anchor="start" textLength="87.01" lengthAdjust="spacingAndGlyphs">Avg: 0.000909%</text><rect x="1205.0" y="931" width="14" height="4" rx="1" fill="#447EBC"/><text x="1227.00" y="936.00" font-size="12" fill="#ccccdc" text-anchor="start" textLength="19.34" lengthAdjust="spacingAndGlyphs">sdk</text><text x="1252.49" y="936.00" font-size="12" fill="#ccccdc" text-anchor="start" textLength="76.17" lengthAdjust="spacingAndGlyphs">Max: 0.0400%</text><text x="1335.01" y="936.00" font-size="12" fill="#ccccdc" text-anchor="start" textLength="87.01" lengthAdjust="spacingAndGlyphs">Avg: 0.000909%</text><rect x="1432.0" y="931" width="14" height="4" rx="1" fill="#C15C17"/><text x="1453.97" y="936.00" font-size="12" fill="#ccccdc" text-anchor="start" textLength="16.18" lengthAdjust="spacingAndGlyphs">sdl</text><text x="1476.30" y="936.00" font-size="12" fill="#ccccdc" text-anchor="start" textLength="76.17" lengthAdjust="spacingAndGlyphs">Max: 0.0400%</text><text x="1558.81" y="936.00" font-size="12" fill="#ccccdc" text-anchor="start" textLength="87.01" lengthAdjust="spacingAndGlyphs">Avg: 0.000909%</text><rect x="1205.0" y="949" width="14" height="4" rx="1" fill="#890F02"/><text x="1227.00" y="954.00" font-size="12" fill="#ccccdc" text-anchor="start" textLength="30.45" lengthAdjust="spacingAndGlyphs">Mean</text><text x="1263.60" y="954.00" font-size="12" fill="#ccccdc" text-anchor="start" textLength="76.17" lengthAdjust="spacingAndGlyphs">Max: 0.0400%</text><text x="1346.11" y="954.00" font-size="12" fill="#ccccdc" text-anchor="start" textLength="87.01" lengthAdjust="spacingAndGlyphs">Avg: 0.000909%</text></g></svg></section>
<div class="panel" style="left:7px;top:970px;width:582px;height:40px"></div><div class="panel" style="left:597px;top:970px;width:582px;height:40px"></div><div class="panel" style="left:1186px;top:970px;width:582px;height:40px"></div>
</main>
</div>
</body></html>
